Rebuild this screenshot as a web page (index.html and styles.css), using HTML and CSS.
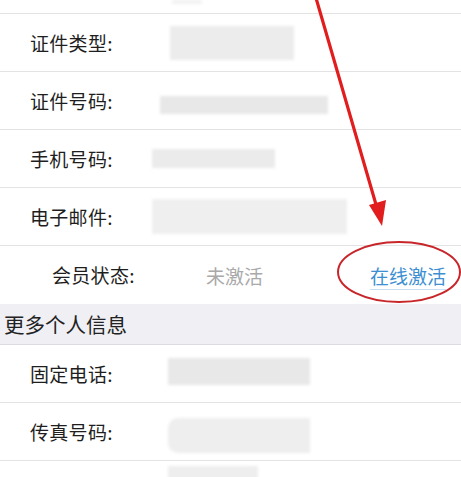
FILE: index.html
```html
<!DOCTYPE html>
<html lang="zh">
<head>
<meta charset="utf-8">
<link rel="stylesheet" href="styles.css">
</head>
<body>
<div class="page">
  <div class="stub"><span class="blur b0"></span></div>
  <div class="row"><span class="label">证件类型:</span><span class="blur b1"></span></div>
  <div class="row"><span class="label">证件号码:</span><span class="blur b2"></span></div>
  <div class="row"><span class="label">手机号码:</span><span class="blur b3"></span></div>
  <div class="row"><span class="label">电子邮件:</span><span class="blur b4"></span></div>
  <div class="row member">
    <span class="label mlabel">会员状态:</span>
    <span class="status">未激活</span>
    <span class="activate">在线激活</span>
  </div>
  <div class="section">更多个人信息</div>
  <div class="row"><span class="label">固定电话:</span><span class="blur b5"></span></div>
  <div class="row"><span class="label">传真号码:</span><span class="blur b6"></span></div>
  <div class="row last"><span class="label"></span><span class="blur b7"></span></div>

  <svg class="mark" width="461" height="477" viewBox="0 0 461 477">
    <line x1="316" y1="-2" x2="377" y2="208" stroke="#e11d1d" stroke-width="3.2" stroke-linecap="round"/>
    <polygon points="382,226 369,205 386,200" fill="#e11d1d"/>
    <ellipse cx="399" cy="272" rx="61" ry="30" fill="none" stroke="#c8262a" stroke-width="2"/>
  </svg>
</div>
</body>
</html>
```
FILE: styles.css
```css
html, body {
  margin: 0;
  padding: 0;
  background: #ffffff;
}
.page {
  position: relative;
  width: 461px;
  height: 477px;
  overflow: hidden;
  font-family: "Noto Sans CJK SC", "Noto Sans", sans-serif;
  color: #222;
}
.stub {
  height: 13px;
  border-bottom: 1px solid #e3e3e6;
  display: flex;
  align-items: flex-start;
  overflow: hidden;
}
.row {
  height: 57px;
  border-bottom: 1px solid #e3e3e6;
  display: flex;
  align-items: center;
  padding-left: 30px;
}
.label {
  flex: 0 0 auto;
  width: 122px;
  font-size: 19px;
  line-height: 24px;
  letter-spacing: 0.3px;
  color: #1e1e1e;
}
.blur {
  display: block;
  background: #e8e8e8;
  filter: blur(1.5px);
}
.b0 { margin-left: 172px; width: 30px; height: 4px; background: #f2f2f2; }
.b1 { margin-left: 18px; width: 124px; height: 34px; background: #ececec; }
.b2 { margin-left: 8px; width: 168px; height: 18px; margin-top: 8px; }
.b3 { margin-left: 0; width: 123px; height: 19px; background: #ebebeb; }
.b4 { margin-left: 0; width: 195px; height: 35px; background: #efefef; }
.b5 { margin-left: 16px; width: 142px; height: 27px; margin-bottom: 4px; }
.b6 { margin-left: 16px; width: 142px; height: 35px; background: #eeeeee; margin-top: 8px; border-radius: 10px 0 0 10px; }
.b7 { align-self: flex-start; margin-left: 16px; width: 90px; height: 14px; margin-top: 5px; background: #eeeeee; }
.row.last { border-bottom: none; }
.member {
  height: 58px;
  border-bottom: none;
  padding-left: 52px;
}
.label.mlabel { width: 154px; }
.status {
  font-size: 19px;
  color: #a9a9a9;
  width: 164px;
}
.activate {
  font-size: 19px;
  color: #3d8fd1;
  text-decoration: underline;
  text-decoration-color: #c9def0;
  text-underline-offset: 5px;
}
.section {
  height: 40px;
  background: #efeff4;
  border-bottom: 1px solid #dcdce0;
  display: flex;
  align-items: center;
  padding-left: 4px;
  font-size: 20.5px;
  color: #222;
}
.mark {
  position: absolute;
  left: 0;
  top: 0;
  pointer-events: none;
}
```
